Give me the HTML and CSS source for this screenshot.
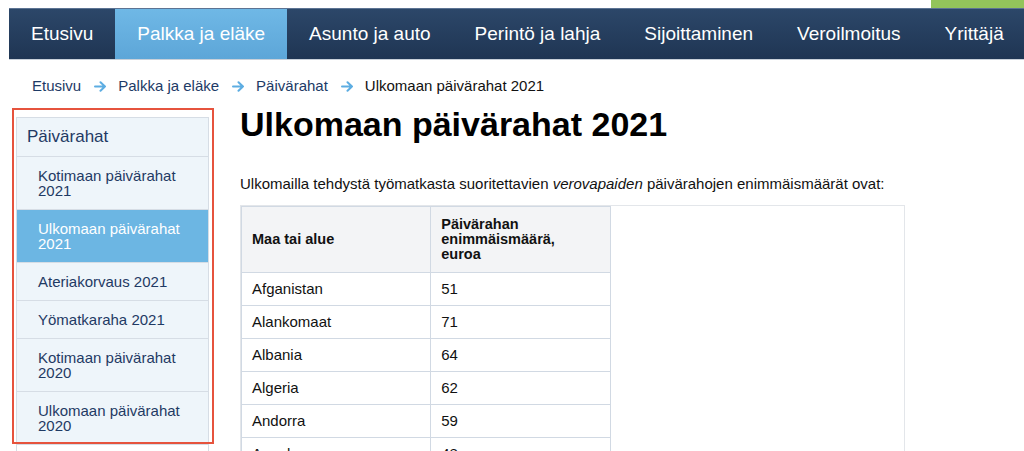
FILE: index.html
```html
<!DOCTYPE html>
<html lang="fi">
<head>
<meta charset="utf-8">
<title>Ulkomaan päivärahat 2021</title>
<link rel="stylesheet" href="styles.css">
</head>
<body>
<div class="topstrip"><div class="green"></div></div>
<nav class="mainnav">
  <a class="tab">Etusivu</a>
  <a class="tab active">Palkka ja eläke</a>
  <a class="tab">Asunto ja auto</a>
  <a class="tab">Perintö ja lahja</a>
  <a class="tab">Sijoittaminen</a>
  <a class="tab">Veroilmoitus</a>
  <a class="tab">Yrittäjä</a>
</nav>
<div class="crumbs">
  <a class="crumb">Etusivu</a>
  <svg class="arrow" width="13" height="11" viewBox="0 0 13 11"><path d="M1 5.5H11M6.5 1.2L11 5.5L6.5 9.8" fill="none" stroke="#5dade2" stroke-width="2" stroke-linecap="round" stroke-linejoin="round"/></svg>
  <a class="crumb">Palkka ja eläke</a>
  <svg class="arrow" width="13" height="11" viewBox="0 0 13 11"><path d="M1 5.5H11M6.5 1.2L11 5.5L6.5 9.8" fill="none" stroke="#5dade2" stroke-width="2" stroke-linecap="round" stroke-linejoin="round"/></svg>
  <a class="crumb">Päivärahat</a>
  <svg class="arrow" width="13" height="11" viewBox="0 0 13 11"><path d="M1 5.5H11M6.5 1.2L11 5.5L6.5 9.8" fill="none" stroke="#5dade2" stroke-width="2" stroke-linecap="round" stroke-linejoin="round"/></svg>
  <span class="current">Ulkomaan päivärahat 2021</span>
</div>
<div class="content">
  <aside class="sidebar">
    <div class="side-head">Päivärahat</div>
    <a class="side-item">Kotimaan päivärahat 2021</a>
    <a class="side-item active">Ulkomaan päivärahat 2021</a>
    <a class="side-item">Ateriakorvaus 2021</a>
    <a class="side-item">Yömatkaraha 2021</a>
    <a class="side-item">Kotimaan päivärahat 2020</a>
    <a class="side-item">Ulkomaan päivärahat 2020</a>
    <div class="side-rest"></div>
  </aside>
  <div class="highlight"></div>
  <main class="main">
    <h1>Ulkomaan päivärahat 2021</h1>
    <p class="intro">Ulkomailla tehdystä työmatkasta suoritettavien <em>verovapaiden</em> päivärahojen enimmäismäärät ovat:</p>
    <div class="tablewrap">
      <table class="rates">
        <thead>
          <tr><th class="c1">Maa tai alue</th><th class="c2">Päivärahan enimmäismäärä, euroa</th></tr>
        </thead>
        <tbody>
          <tr><td>Afganistan</td><td>51</td></tr>
          <tr><td>Alankomaat</td><td>71</td></tr>
          <tr><td>Albania</td><td>64</td></tr>
          <tr><td>Algeria</td><td>62</td></tr>
          <tr><td>Andorra</td><td>59</td></tr>
          <tr><td>Angola</td><td>48</td></tr>
        </tbody>
      </table>
    </div>
  </main>
</div>
</body>
</html>
```
FILE: styles.css
```css
html, body {
  margin: 0;
  padding: 0;
  background: #fff;
  overflow: hidden;
}
body {
  font-family: "Liberation Sans", Arial, sans-serif;
  color: #111;
}
.topstrip {
  height: 8px;
  display: flex;
  justify-content: flex-end;
}
.green {
  width: 93px;
  height: 8px;
  background: #93c45b;
}
.mainnav {
  margin-left: 9px;
  display: flex;
  background: linear-gradient(#2c4769, #1f3553);
  border-top: 1px solid #5c7393;
  border-bottom: 1px solid #c9d1da;
  height: 50px;
}
.tab {
  display: block;
  padding: 0 22px;
  line-height: 50px;
  font-size: 19px;
  color: #fff;
  white-space: nowrap;
}
.tab.active {
  background: linear-gradient(#6fb8e6, #5da6d8);
}
.crumbs {
  display: flex;
  align-items: center;
  padding: 17px 0 9px 32px;
  font-size: 15px;
  line-height: 18px;
}
.crumb {
  color: #1d3a66;
}
.arrow {
  margin: 0 11px 0 13px;
  display: block;
}
.current {
  color: #111;
}
.content {
  position: relative;
  display: flex;
  align-items: flex-start;
  gap: 31px;
}
.sidebar {
  margin-left: 16px;
  margin-top: 13px;
  width: 193px;
  flex: none;
  box-sizing: border-box;
  border: 1px solid #d6dde5;
  border-bottom: none;
  background: #fff;
}
.side-head {
  background: #eef5fa;
  border-bottom: 1px solid #d6dde5;
  padding: 9px 10px;
  font-size: 17px;
  line-height: 20px;
  color: #1f3a64;
}
.side-item {
  display: block;
  background: #eef5fa;
  border-bottom: 1px solid #d6dde5;
  padding: 11px 10px 11px 21px;
  font-size: 15px;
  line-height: 15px;
  color: #1f3a64;
}
.side-item.active {
  background: #6cb6e3;
  color: #fff;
}
.side-rest {
  height: 40px;
  background: #fff;
}
.highlight {
  position: absolute;
  left: 12px;
  top: 4px;
  width: 198px;
  height: 332px;
  border: 2px solid #e6533d;
  pointer-events: none;
}
.main {
  flex: 1;
}
h1 {
  margin: 0;
  font-size: 34px;
  line-height: 40px;
  font-weight: bold;
  color: #000;
}
.intro {
  margin: 31px 0 12px;
  font-size: 15px;
  line-height: 18px;
  color: #111;
}
.tablewrap {
  width: 665px;
  box-sizing: border-box;
  border: 1px solid #e3e6ea;
  height: 260px;
}
.rates {
  border-collapse: collapse;
  width: 370px;
  font-size: 15px;
  color: #111;
}
.rates th, .rates td {
  border: 1px solid #d1d9e3;
  text-align: left;
  padding: 7px 10px;
  line-height: 18px;
}
.rates th {
  background: #f3f4f6;
  font-weight: bold;
  font-size: 14.5px;
  line-height: 15px;
  padding: 10px 10px;
  vertical-align: middle;
}
.rates th.c2 {
  padding-right: 30px;
}
.c1 {
  width: 169px;
}
.c2 {
  width: 139px;
}
```
